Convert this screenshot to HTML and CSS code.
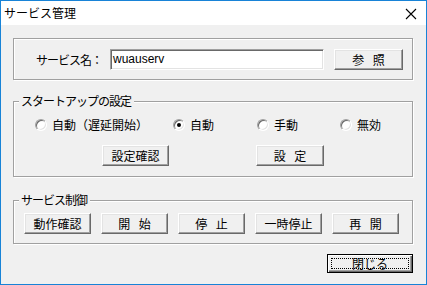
FILE: index.html
```html
<!DOCTYPE html>
<html lang="ja">
<head>
<meta charset="utf-8">
<link rel="stylesheet" href="styles.css">
</head>
<body>
<div class="window">
  <div class="titlebar">
    <span class="title">サービス管理</span>
    <svg class="close" width="12" height="12" viewBox="0 0 12 12"><path d="M1 1L11 11M11 1L1 11" stroke="#000" stroke-width="1.1" fill="none"/></svg>
  </div>
  <div class="client">
    <div class="group g1">
      <span class="label kana">サービス名：</span>
      <div class="input">wuauserv</div>
      <div class="btn btn-ref">参 照</div>
    </div>
    <div class="group g2">
      <span class="legend kana">スタートアップの設定</span>
      <div class="radios">
        <div class="opt"><span class="radio"></span><span>自動（遅延開始）</span></div>
        <div class="opt"><span class="radio checked"></span><span>自動</span></div>
        <div class="opt"><span class="radio"></span><span>手動</span></div>
        <div class="opt"><span class="radio"></span><span>無効</span></div>
      </div>
      <div class="row2">
        <div class="btn b-check">設定確認</div>
        <div class="btn b-set">設 定</div>
      </div>
    </div>
    <div class="group g3">
      <span class="legend kana">サービス制御</span>
      <div class="btnrow">
        <div class="btn">動作確認</div>
        <div class="btn">開 始</div>
        <div class="btn">停 止</div>
        <div class="btn">一時停止</div>
        <div class="btn">再 開</div>
      </div>
    </div>
    <div class="footer">
      <div class="btn default"><span class="focus"></span>閉じる</div>
    </div>
  </div>
</div>
</body>
</html>
```
FILE: styles.css
```css
* { box-sizing: border-box; }
html, body { margin: 0; padding: 0; }
body {
  font-family: "Noto Sans CJK JP", "Noto Sans", sans-serif;
  font-size: 12px;
  color: #000;
  background: #f0f0f0;
}
.window {
  width: 427px;
  height: 285px;
  border: 1px solid #1883d7;
  background: #f0f0f0;
  display: flex;
  flex-direction: column;
}
.titlebar {
  height: 24px;
  background: #fff;
  display: flex;
  align-items: center;
  justify-content: space-between;
  padding: 0 9px 0 3px;
}
.title { font-size: 12px; line-height: 14px; margin-top: -1px; }
.close { display: block; margin-top: 2px; }
.client {
  flex: 1;
  padding: 13px 13px 0 12px;
  display: flex;
  flex-direction: column;
}
.kana { letter-spacing: -1px; }
.group {
  position: relative;
  border: 1px solid #a0a0a0;
  box-shadow: inset 1px 1px #fff, 1px 1px #fff;
}
.legend {
  position: absolute;
  left: 5px;
  top: -8px;
  padding: 0 3px 0 2px;
  background: #f0f0f0;
  line-height: 14px;
}
.g1 {
  height: 42px;
  display: flex;
  align-items: center;
  padding: 1px 0 0 22px;
}
.label { width: 74px; line-height: 14px; }
.input {
  width: 214px;
  height: 21px;
  background: #fff;
  border: 1px solid;
  border-color: #a0a0a0 #fff #fff #a0a0a0;
  box-shadow: inset 1px 1px #696969, inset -1px -1px #e3e3e3;
  font-family: "Liberation Sans", Arial, sans-serif;
  font-size: 12px;
  line-height: 18px;
  padding: 0 0 0 2px;
}
.btn {
  height: 21px;
  border: 1px solid;
  border-color: #fff #696969 #696969 #fff;
  box-shadow: inset -1px -1px #a0a0a0, inset 1px 1px #e3e3e3;
  background: #f0f0f0;
  display: flex;
  align-items: center;
  justify-content: center;
  line-height: 14px;
  word-spacing: 6px;
  padding-top: 1px;
}
.btn-ref { width: 69px; margin-left: 10px; }
.g2 {
  height: 76px;
  margin-top: 21px;
  padding: 15px 0 0 21px;
}
.radios {
  display: grid;
  grid-template-columns: 138px 84px 83px auto;
  height: 16px;
  align-items: center;
}
.opt { display: flex; align-items: center; gap: 5px; line-height: 14px; }
.radio {
  position: relative;
  width: 12px;
  height: 12px;
  border-radius: 50%;
  background: #fff;
  border: 1px solid;
  border-color: #a0a0a0 #fff #fff #a0a0a0;
  box-shadow: inset 1px 1px #696969, inset -1px -1px #e3e3e3;
  flex: none;
}
.radio.checked::after {
  content: "";
  position: absolute;
  left: 3px;
  top: 3px;
  width: 4px;
  height: 4px;
  border-radius: 50%;
  background: #000;
}
.row2 {
  display: flex;
  margin-top: 12px;
  padding-left: 67px;
}
.b-check { width: 67px; }
.b-set { width: 68px; margin-left: 87px; }
.g3 {
  height: 44px;
  margin-top: 23px;
  padding: 12px 0 0 10px;
}
.btnrow { display: flex; gap: 10px; }
.btnrow .btn { width: 67px; }
.footer {
  display: flex;
  justify-content: flex-end;
  margin-top: 10px;
}
.btn.default {
  position: relative;
  width: 86px;
  height: 19px;
  border: 1px solid #000;
  box-shadow: inset 1px 1px #fff, inset -1px -1px #696969, inset -2px -2px #a0a0a0;
  padding-top: 0;
}
.focus {
  position: absolute;
  left: 3px;
  top: 3px;
  right: 3px;
  bottom: 3px;
  border: 1px dotted #000;
}
```
